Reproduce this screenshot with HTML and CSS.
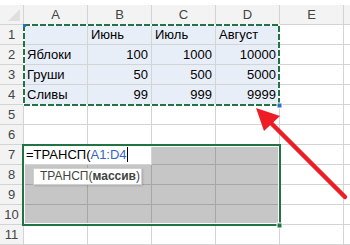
FILE: index.html
```html
<!DOCTYPE html>
<html>
	<head>
		<meta charset="UTF-8">
		<title>ТРАНСП</title>
		<link rel="stylesheet" href="styles.css">
	</head>
	<body>
		<div class="sheet">
			<div class="gap"></div>
			<div class="grid">
				<div class="corner"><span class="tri"></span></div>
				<div class="h">A</div>
				<div class="h">B</div>
				<div class="h">C</div>
				<div class="h">D</div>
				<div class="h">E</div>
				<div class="h"></div>

				<div class="n">1</div>
				<div class="c b"></div>
				<div class="c b">Июнь</div>
				<div class="c b">Июль</div>
				<div class="c b">Август</div>
				<div class="c"></div>
				<div class="c"></div>

				<div class="n">2</div>
				<div class="c b">Яблоки</div>
				<div class="c b r">100</div>
				<div class="c b r">1000</div>
				<div class="c b r">10000</div>
				<div class="c"></div>
				<div class="c"></div>

				<div class="n">3</div>
				<div class="c b">Груши</div>
				<div class="c b r">50</div>
				<div class="c b r">500</div>
				<div class="c b r">5000</div>
				<div class="c"></div>
				<div class="c"></div>

				<div class="n">4</div>
				<div class="c b">Сливы</div>
				<div class="c b r">99</div>
				<div class="c b r">999</div>
				<div class="c b r">9999</div>
				<div class="c"></div>
				<div class="c"></div>

				<div class="n">5</div>
				<div class="c"></div><div class="c"></div><div class="c"></div><div class="c"></div><div class="c"></div><div class="c"></div>

				<div class="n">6</div>
				<div class="c"></div><div class="c"></div><div class="c"></div><div class="c"></div><div class="c"></div><div class="c"></div>

				<div class="n">7</div>
				<div class="c edit">=ТРАНСП(<span class="ref">A1:D4</span><span class="caret"></span></div>
				<div class="c g"></div>
				<div class="c g"></div>
				<div class="c"></div>
				<div class="c"></div>

				<div class="n">8</div>
				<div class="c g"></div><div class="c g"></div><div class="c g"></div><div class="c g"></div><div class="c"></div><div class="c"></div>

				<div class="n">9</div>
				<div class="c g"></div><div class="c g"></div><div class="c g"></div><div class="c g"></div><div class="c"></div><div class="c"></div>

				<div class="n">10</div>
				<div class="c g"></div><div class="c g"></div><div class="c g"></div><div class="c g"></div><div class="c"></div><div class="c"></div>

				<div class="n">11</div>
				<div class="c"></div><div class="c"></div><div class="c"></div><div class="c"></div><div class="c"></div><div class="c"></div>
			</div>

			<div class="sel"></div>
			<div class="tip">ТРАНСП(<b>массив</b>)</div>

			<svg class="over" width="350" height="245" viewBox="0 0 350 245">
				<rect x="24" y="25" width="255" height="80" fill="none" stroke="#fff" stroke-width="2"/>
				<rect x="24" y="25" width="255" height="80" fill="none" stroke="#217346" stroke-width="2" stroke-dasharray="6 2"/>
				<rect x="23" y="24" width="3" height="3" fill="#2e6ccc"/>
				<rect x="277" y="103" width="5" height="5" fill="#2e6ccc" stroke="#fff" stroke-width="1"/>
				<rect x="277" y="223" width="5" height="5" fill="#217346" stroke="#fff" stroke-width="1"/>
				<line x1="345" y1="197" x2="270" y2="122" stroke="#ee1c25" stroke-width="4.5" stroke-linecap="round"/>
				<polygon points="256,108 280,116 264,131" fill="#ee1c25"/>
			</svg>
		</div>
	</body>
</html>
```

FILE: styles.css
```css
body{
	margin: 0;
	padding: 0;
	background: #fff;
}

.sheet{
	position: relative;
	width: 350px;
	height: 245px;
	overflow: hidden;
	font-family: "Liberation Sans", Arial, sans-serif;
	font-size: 13px;
	color: #000;
}
.gap{
	height: 5px;
}
.grid{
	display: grid;
	grid-template-columns: 24px repeat(5, 64px) 1fr;
	grid-auto-rows: 20px;
}
.grid > div{
	box-sizing: border-box;
	border-right: 1px solid #d4d4d4;
	border-bottom: 1px solid #d4d4d4;
	white-space: nowrap;
	overflow: hidden;
}

.corner{
	position: relative;
	background: #f3f3f3;
}
.tri{
	position: absolute;
	right: 3px;
	bottom: 3px;
	width: 0;
	height: 0;
	border-left: 12px solid transparent;
	border-bottom: 12px solid #dfdfdf;
}
.h{
	background: #f3f3f3;
	color: #444;
	text-align: center;
	line-height: 19px;
}
.n{
	background: #f3f3f3;
	color: #444;
	text-align: center;
	line-height: 19px;
}

.c{
	padding: 0 3px;
	line-height: 19px;
}
.r{
	text-align: right;
}
.b{
	background: #e8eef8;
}
.g{
	background: #c6c6c6;
	border-color: #a6a6a6 !important;
}
.edit{
	grid-column: span 2;
	background: #fff;
	padding-left: 2px;
}
.ref{
	color: #3566c5;
}
.caret{
	display: inline-block;
	width: 1px;
	height: 15px;
	background: #000;
	vertical-align: -3px;
}

.sel{
	position: absolute;
	left: 22px;
	top: 144px;
	width: 255px;
	height: 78px;
	border: 2px solid #217346;
	box-shadow: inset 0 0 0 1px #fff;
}
.tip{
	position: absolute;
	left: 33px;
	top: 168px;
	width: 109px;
	height: 17px;
	box-sizing: border-box;
	background: #fff;
	border: 1px solid #d0d0d0;
	box-shadow: 1px 1px 2px rgba(0,0,0,0.15);
	color: #444;
	font-size: 12px;
	line-height: 15px;
	padding-left: 6px;
}
.tip b{
	font-weight: bold;
}
.over{
	position: absolute;
	left: 0;
	top: 0;
}
```
